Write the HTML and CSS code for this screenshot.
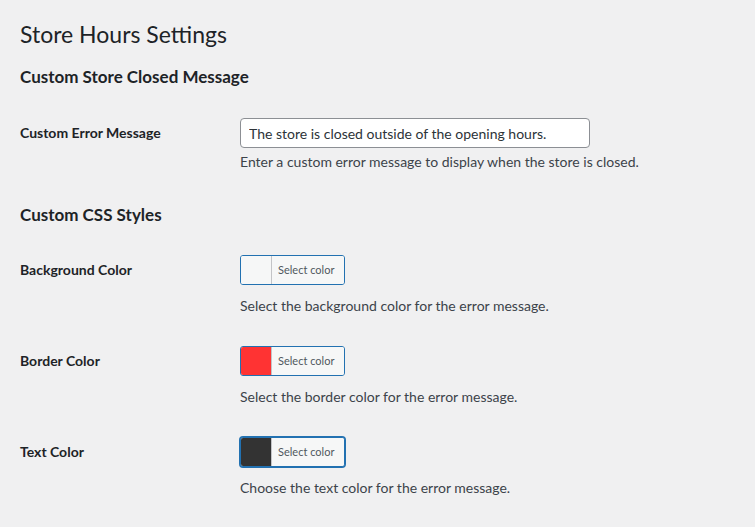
FILE: index.html
```
<!DOCTYPE html>
<html lang="en">
<head>
<meta charset="utf-8">
<title>Store Hours Settings</title>
<link rel="stylesheet" href="styles.css">
</head>
<body>
<div class="wrap">
  <h1 class="page-title">Store Hours Settings</h1>

  <h2 class="section-title section-title-first">Custom Store Closed Message</h2>
  <div class="form-table">
    <div class="form-row">
      <div class="form-label">Custom Error Message</div>
      <div class="form-field">
        <input class="regular-text" type="text" value="The store is closed outside of the opening hours.">
        <p class="description">Enter a custom error message to display when the store is closed.</p>
      </div>
    </div>
  </div>

  <h2 class="section-title">Custom CSS Styles</h2>
  <div class="form-table">
    <div class="form-row">
      <div class="form-label">Background Color</div>
      <div class="form-field">
        <button class="color-result" type="button"><span class="swatch swatch-light"></span><span class="color-result-text">Select color</span></button>
        <p class="description desc-after-picker">Select the background color for the error message.</p>
      </div>
    </div>
    <div class="form-row">
      <div class="form-label">Border Color</div>
      <div class="form-field">
        <button class="color-result" type="button"><span class="swatch swatch-red"></span><span class="color-result-text">Select color</span></button>
        <p class="description desc-after-picker">Select the border color for the error message.</p>
      </div>
    </div>
    <div class="form-row">
      <div class="form-label">Text Color</div>
      <div class="form-field">
        <button class="color-result is-focused" type="button"><span class="swatch swatch-dark"></span><span class="color-result-text">Select color</span></button>
        <p class="description desc-after-picker">Choose the text color for the error message.</p>
      </div>
    </div>
  </div>
</div>
</body>
</html>
```
FILE: styles.css
```
html, body {
  margin: 0;
  padding: 0;
  background: #f0f0f1;
}

body {
  font-family: Lato, "Liberation Sans", sans-serif;
  color: #1d2327;
  font-size: 14px;
}

.wrap {
  padding: 10px 20px 0 20px;
}

.page-title {
  margin: 0;
  padding: 9px 0 0;
  font-size: 23px;
  font-weight: 400;
  line-height: 30px;
  color: #1d2327;
}

.section-title {
  margin: 18px 0 15px;
  font-size: 17px;
  font-weight: 700;
  line-height: 20px;
  color: #1d2327;
}

.section-title-first {
  margin-bottom: 16px;
}

.form-row {
  display: grid;
  grid-template-columns: 210px 1fr;
}

.form-label {
  padding: 20px 0;
  font-size: 14px;
  font-weight: 700;
  line-height: 20px;
  color: #1d2327;
}

.form-field {
  padding: 15px 10px;
}

.regular-text {
  display: block;
  box-sizing: border-box;
  width: 350px;
  height: 30px;
  margin: 0;
  padding: 0 8px;
  border: 1px solid #8c8f94;
  border-radius: 4px;
  background: #fff;
  color: #2c3338;
  font-family: inherit;
  font-size: 14px;
  line-height: 28px;
}

.description {
  margin: 4px 0 0;
  font-size: 14px;
  line-height: 20px;
  color: #3c434a;
}

.desc-after-picker {
  margin-top: 11px;
}

.color-result {
  display: flex;
  align-items: stretch;
  box-sizing: border-box;
  width: 105px;
  height: 30px;
  margin: 0;
  padding: 0;
  border: 1px solid #2271b1;
  border-radius: 3px;
  background: #f6f7f7;
  overflow: hidden;
  cursor: pointer;
  font-family: inherit;
}

.color-result.is-focused {
  box-shadow: 0 0 0 1px #2271b1;
}

.swatch {
  display: block;
  width: 30px;
  flex: none;
}

.swatch-light { background: #f6f7f7; }
.swatch-red { background: #ff3333; }
.swatch-dark { background: #333333; }

.color-result-text {
  display: block;
  flex: 1;
  padding: 0 6px;
  border-left: 1px solid #c3c4c7;
  background: #f6f7f7;
  color: #50575e;
  font-size: 11px;
  line-height: 28px;
  text-align: left;
}
```
